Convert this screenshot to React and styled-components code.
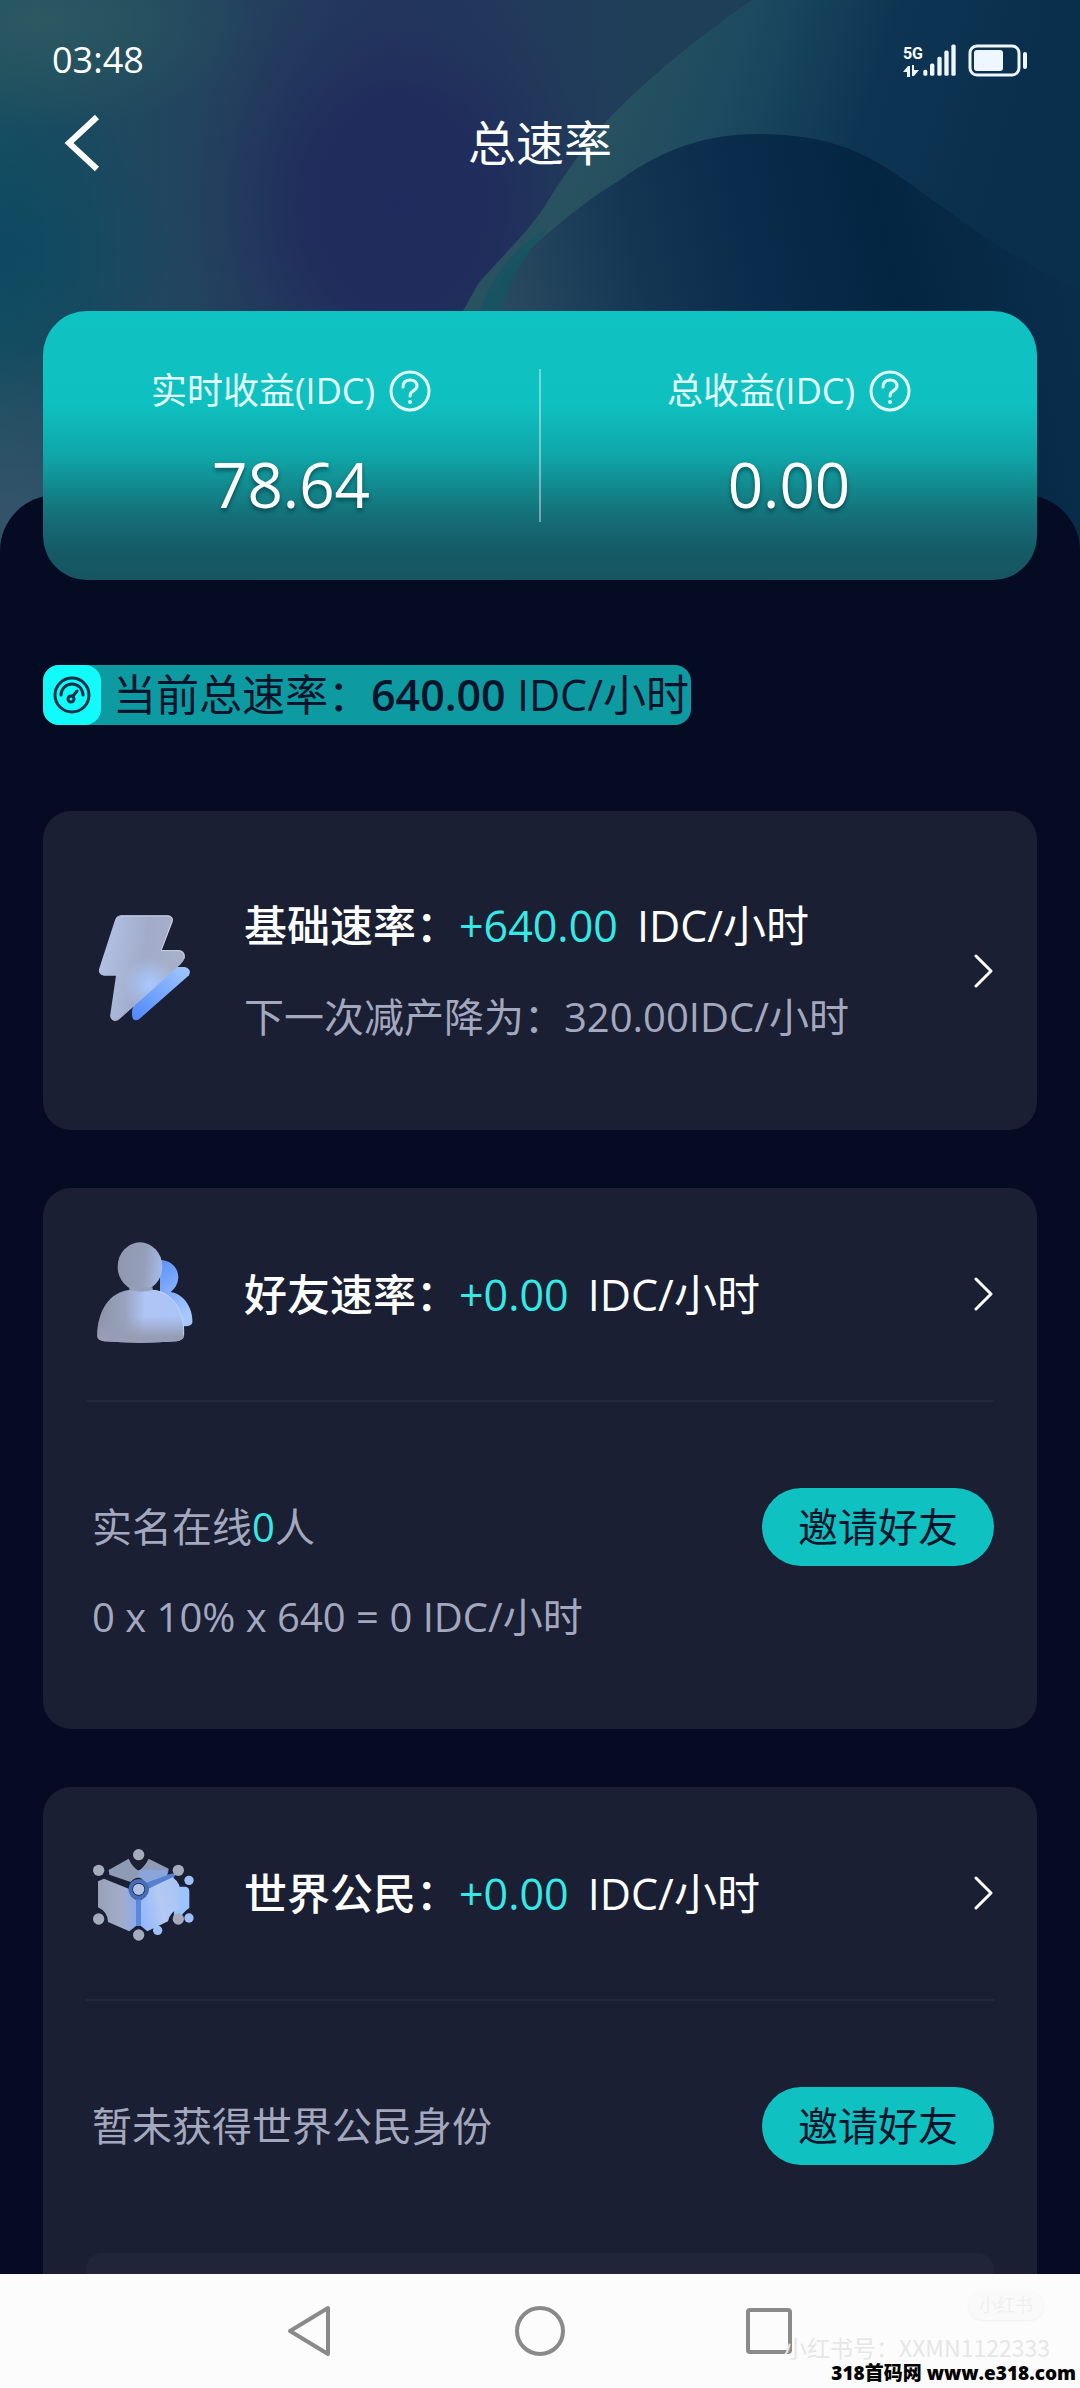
/* eslint react/prop-types: 0 */
import React from "react";
import styled, { createGlobalStyle } from "styled-components";

const GlobalStyle = createGlobalStyle`
    * {
        box-sizing: border-box;
    }

    body {
        margin: 0;
        background: #050b22;
        font-family: "Open Sans", "Noto Sans CJK SC", sans-serif;
        color: #ffffff;
    }

    button {
        padding: 0;
        border: none;
        background: transparent;
        font-family: inherit;
        color: inherit;
        cursor: pointer;
    }

    svg {
        display: block;
        flex: none;
    }
`;

const Screen = styled.div`
    display: flex;
    flex-direction: column;
    height: 100vh;
`;

const Scroll = styled.main`
    position: relative;
    flex: 1;
    min-height: 0;
    overflow-y: auto;
    scrollbar-width: none;
`;

const Artwork = styled.svg`
    position: absolute;
    top: 0;
    left: 0;
    width: 100%;
    height: 600px;
`;

const Top = styled.div`
    position: relative;
    padding-bottom: 297px;
`;

const StatusBar = styled.div`
    display: flex;
    align-items: center;
    justify-content: space-between;
    height: 88px;
    padding: 32px 52px 0;
    font-size: 36px;
    line-height: 56px;
`;

const StatusIcons = styled.div`
    display: flex;
    align-items: center;
    gap: 11px;
`;

const Signal = styled.div`
    display: flex;
    align-items: flex-end;
`;

const Network = styled.div`
    display: flex;
    flex-direction: column;
    gap: 3px;
    font-family: "Roboto", sans-serif;
    font-size: 16px;
    font-weight: 700;
    line-height: 16px;
`;

const Header = styled.header`
    display: grid;
    grid-template-columns: 100px 1fr 100px;
    align-items: center;
    height: 110px;
    padding: 0 32px;
`;

const IconButton = styled.button`
    display: flex;
    justify-content: center;
`;

const PageTitle = styled.h1`
    margin: 0;
    font-size: 48px;
    font-weight: 400;
    line-height: 72px;
    text-align: center;
`;

const Body = styled.div`
    position: relative;
    display: flex;
    flex-direction: column;
    align-items: stretch;
    padding: 0 43px 58px;
    background: #050b22;
    border-radius: 56px 56px 0 0;
`;

const Summary = styled.section`
    display: flex;
    align-items: center;
    margin-top: -184px;
    padding: 56px 0;
    border-radius: 44px;
    background: linear-gradient(#0fc3c2 0%, #0fc0c0 34%, #0fa6a9 54%, #12888c 66%, #146c75 78%, #155a66 90%, #165561 100%);
`;

const Stat = styled.div`
    display: flex;
    flex: 1;
    flex-direction: column;
    align-items: center;
    gap: 29px;
`;

const StatLabel = styled.div`
    display: flex;
    align-items: center;
    gap: 14px;
    font-size: 36px;
    line-height: 48px;
    color: #e4ffff;
`;

const StatValue = styled.div`
    font-size: 62px;
    line-height: 80px;
    text-shadow: 0 3px 4px rgba(0, 40, 50, 0.6);
`;

const Separator = styled.div`
    width: 2px;
    height: 153px;
    background: rgba(255, 255, 255, 0.4);
`;

const RateBadge = styled.div`
    display: flex;
    align-items: center;
    align-self: flex-start;
    gap: 12px;
    height: 60px;
    margin: 85px 0 86px;
    padding-right: 2px;
    border-radius: 16px;
    background: #0e9aa1;
    color: #06142b;
    font-size: 43px;
    line-height: 60px;
    white-space: nowrap;

    strong {
        font-weight: 600;
    }
`;

const BadgeIcon = styled.span`
    display: flex;
    align-items: center;
    justify-content: center;
    width: 58px;
    height: 60px;
    border-radius: 16px;
    background: #12fbfb;
`;

const Cards = styled.div`
    display: flex;
    flex-direction: column;
    gap: 58px;
`;

const Card = styled.section`
    padding: 0 43px;
    border-radius: 28px;
    background: #1a1f33;
`;

const CardHead = styled.div`
    display: flex;
    align-items: center;
    gap: 48px;
    height: ${({ $tall }) => ($tall ? "319px" : "212px")};
    padding-left: 6px;
`;

const CardText = styled.div`
    display: flex;
    flex: 1;
    flex-direction: column;
    gap: 31px;
    padding-top: 2px;
`;

const CardTitle = styled.h2`
    margin: 0;
    font-size: 43px;
    font-weight: 400;
    line-height: 60px;
    white-space: nowrap;

    b {
        font-weight: 500;
    }
`;

const Highlight = styled.span`
    color: #35e9e6;
`;

const Amount = styled(Highlight)`
    margin-right: 8px;
`;

const Muted = styled.p`
    margin: 0;
    font-size: 40px;
    line-height: 60px;
    color: #a3a8bf;
`;

const Details = styled.div`
    display: flex;
    flex-direction: column;
    gap: 21px;
    padding: 86px 0 82px;
    border-top: 2px solid #23283a;
`;

const DetailRow = styled.div`
    display: flex;
    align-items: center;
    justify-content: space-between;
    padding-left: 6px;
`;

const InviteButton = styled.button`
    width: 232px;
    height: 78px;
    border-radius: 39px;
    background: #0fc1c1;
    color: #06142b;
    font-size: 40px;
    line-height: 60px;
`;

const Inset = styled.div`
    height: 120px;
    margin-top: 67px;
    border-radius: 16px 16px 0 0;
    background: #20253a;
`;

const NavBar = styled.nav`
    position: relative;
    display: flex;
    flex: none;
    align-items: center;
    justify-content: center;
    gap: 180px;
    height: 114px;
    background: #fcfcfc;
    color: #8a8a8a;
`;

const Stamp = styled.div`
    position: absolute;
    right: 4px;
    bottom: 2px;
    display: flex;
    flex-direction: column;
    align-items: flex-end;
`;

const StampPill = styled.span`
    margin: 0 32px 14px 0;
    padding: 0 11px;
    border-radius: 16px;
    background: #fafafa;
    box-shadow: 0 1px 2px #f0f0f0;
    color: #efefef;
    font-size: 18px;
    line-height: 30px;
`;

const StampId = styled.span`
    margin-right: 26px;
    color: #e6e6e6;
    font-family: "Noto Sans CJK SC", sans-serif;
    font-size: 23px;
    line-height: 26px;
`;

const StampSite = styled.span`
    color: #000000;
    font-size: 19px;
    font-weight: 800;
    line-height: 26px;
`;

const Backdrop = () => (
    <Artwork viewBox="0 0 1080 600" preserveAspectRatio="none" aria-hidden="true">
        <defs>
            <linearGradient id="base" x1="0" y1="0" x2="1" y2="0">
                <stop offset="0" stopColor="#1a4f60" />
                <stop offset="0.2" stopColor="#23435e" />
                <stop offset="0.36" stopColor="#24345d" />
                <stop offset="0.6" stopColor="#1f3f58" />
            </linearGradient>
            <radialGradient id="indigo">
                <stop offset="0" stopColor="#1f2b5c" />
                <stop offset="0.45" stopColor="#202d5c" stopOpacity="0.9" />
                <stop offset="1" stopColor="#223a5c" stopOpacity="0" />
            </radialGradient>
            <radialGradient id="teal">
                <stop offset="0" stopColor="#0c4962" />
                <stop offset="1" stopColor="#0c4962" stopOpacity="0" />
            </radialGradient>
            <radialGradient id="moss">
                <stop offset="0" stopColor="#2c5861" />
                <stop offset="1" stopColor="#2c5861" stopOpacity="0" />
            </radialGradient>
            <radialGradient id="slate">
                <stop offset="0" stopColor="#34536a" />
                <stop offset="1" stopColor="#34536a" stopOpacity="0" />
            </radialGradient>
            <linearGradient id="wave" gradientUnits="userSpaceOnUse" x1="600" y1="100" x2="980" y2="220">
                <stop offset="0" stopColor="#28525f" />
                <stop offset="0.3" stopColor="#1d4a60" />
                <stop offset="0.65" stopColor="#0d3553" />
                <stop offset="1" stopColor="#0a2f4d" />
            </linearGradient>
            <linearGradient id="hill" gradientUnits="userSpaceOnUse" x1="500" y1="300" x2="1060" y2="180">
                <stop offset="0" stopColor="#2a4a60" />
                <stop offset="0.25" stopColor="#143653" />
                <stop offset="0.45" stopColor="#0a2b4b" />
                <stop offset="0.68" stopColor="#042542" />
                <stop offset="1" stopColor="#042542" stopOpacity="0.1" />
            </linearGradient>
        </defs>
        <rect width="1080" height="600" fill="url(#base)" />
        <ellipse cx="0" cy="250" rx="170" ry="180" fill="url(#teal)" />
        <ellipse cx="40" cy="20" rx="220" ry="110" fill="url(#moss)" />
        <ellipse cx="10" cy="510" rx="200" ry="160" fill="url(#slate)" />
        <ellipse cx="400" cy="205" rx="230" ry="260" fill="url(#indigo)" />
        <path d="M752 0C698 38 655 72 610 117C592 137 568 168 545 206C525 236 498 260 478 284L458 320V600H1080V0Z" fill="url(#wave)" />
        <path d="M478 325C484 300 492 282 530 249C560 222 590 198 620 180C665 147 710 134 758 134C813 134 850 146 880 164C935 197 990 250 1080 290V600H478Z" fill="url(#hill)" />
        <path d="M476 325C486 285 508 252 548 228C520 262 508 280 498 325Z" fill="#145562" fillOpacity="0.8" />
    </Artwork>
);

const SignalBars = () => (
    <svg width="34" height="33" viewBox="188 68 102 98" fill="#eef6ff" aria-hidden="true">
        <rect x="189" y="145" width="12" height="18" rx="5" />
        <rect x="209" y="126" width="13" height="37" rx="5" />
        <rect x="231" y="106" width="13" height="57" rx="5" />
        <rect x="252" y="87" width="13" height="76" rx="5" />
        <rect x="273" y="69" width="13" height="94" rx="5" />
    </svg>
);

const DataArrows = () => (
    <svg width="16" height="12" viewBox="0 0 16 12" fill="#eef6ff" aria-hidden="true">
        <path d="M0 7L5 1H7V12H4V7Z" />
        <path d="M9 0H11V5H16L11 11H9Z" />
    </svg>
);

const Battery = () => (
    <svg width="60" height="33" viewBox="0 0 60 33" fill="none" aria-hidden="true">
        <rect x="2" y="2" width="49" height="29" rx="7" stroke="#eef6ff" strokeWidth="3" />
        <rect x="6" y="6" width="29" height="21" rx="3" fill="#eef6ff" />
        <rect x="55" y="8" width="4" height="17" rx="2" fill="#eef6ff" />
    </svg>
);

const HelpIcon = () => (
    <svg width="42" height="42" viewBox="0 0 42 42" fill="none" stroke="currentColor" strokeWidth="3" strokeLinecap="round" aria-hidden="true">
        <circle cx="21" cy="21" r="19" />
        <path d="M14 17C14 12 17 10 21 10C25 10 28 12 28 16C28 21 21 20 21 26" />
        <circle cx="21" cy="32" r="2" fill="currentColor" stroke="none" />
    </svg>
);

const GaugeIcon = () => (
    <svg width="40" height="40" viewBox="0 0 40 40" fill="none" stroke="#0b3048" strokeWidth="3" strokeLinecap="round" aria-hidden="true">
        <circle cx="20" cy="20" r="17" />
        <path d="M9 20A11 11 0 0 1 31 20" />
        <path d="M21 21L25 16" />
        <circle cx="19" cy="24" r="3" />
    </svg>
);

const Chevron = () => (
    <svg width="20" height="34" viewBox="0 0 20 34" fill="none" stroke="#ffffff" strokeWidth="3" strokeLinecap="round" strokeLinejoin="round" aria-hidden="true">
        <path d="M2 2L17 17L2 32" />
    </svg>
);

const BoltIcon = () => (
    <svg width="104" height="112" viewBox="96 102 312 336" aria-hidden="true">
        <defs>
            <linearGradient id="boltFront" x1="0" y1="0.4" x2="1" y2="0.6">
                <stop offset="0" stopColor="#b3c1e4" />
                <stop offset="0.5" stopColor="#a1acca" />
                <stop offset="1" stopColor="#a9b1c8" />
            </linearGradient>
            <linearGradient id="boltBack" x1="0" y1="1" x2="1" y2="0">
                <stop offset="0" stopColor="#5087fa" />
                <stop offset="1" stopColor="#a0c8ff" />
            </linearGradient>
            <radialGradient id="boltGlow" gradientUnits="userSpaceOnUse" cx="270" cy="310" r="80">
                <stop offset="0" stopColor="#a9c8ff" />
                <stop offset="1" stopColor="#a9c8ff" stopOpacity="0" />
            </radialGradient>
            <path id="bolt" d="M182 103H324Q342 105 338 122L305 207H358Q378 211 374 232Q371 241 362 250L178 415Q166 424 156 416Q149 410 151 400L168 284H132Q115 281 117 265L165 117Q170 104 182 103Z" />
        </defs>
        <path d="M344 258H374Q396 264 387 283L238 414Q228 422 219 414Q212 396 220 375Z" fill="url(#boltBack)" />
        <use href="#bolt" fill="url(#boltFront)" />
        <use href="#bolt" fill="url(#boltGlow)" />
        <path d="M182 105H324Q340 107 336 122L303 209H358Q375 213 372 232" fill="none" stroke="#c8d0e4" strokeWidth="3" />
    </svg>
);

const FriendsIcon = () => (
    <svg width="104" height="112" viewBox="96 84 312 336" aria-hidden="true">
        <defs>
            <linearGradient id="headFront" x1="0" y1="0.4" x2="1" y2="0.5">
                <stop offset="0" stopColor="#9098ae" />
                <stop offset="0.6" stopColor="#959fb9" />
                <stop offset="1" stopColor="#a6bbea" />
            </linearGradient>
            <linearGradient id="bodyFront" x1="0" y1="0" x2="1" y2="0">
                <stop offset="0" stopColor="#8d94a8" />
                <stop offset="0.32" stopColor="#98a3bf" />
                <stop offset="0.55" stopColor="#b0c5f4" />
                <stop offset="1" stopColor="#a9c4f8" />
            </linearGradient>
            <linearGradient id="bodyShade" x1="0" y1="0" x2="0" y2="1">
                <stop offset="0.5" stopColor="#969db4" stopOpacity="0" />
                <stop offset="0.9" stopColor="#969db4" />
            </linearGradient>
            <linearGradient id="friendBack" x1="0" y1="0" x2="0.4" y2="1">
                <stop offset="0" stopColor="#5e92f8" />
                <stop offset="1" stopColor="#a6c8ff" />
            </linearGradient>
            <path id="torso" d="M208 240Q240 250 278 240C335 244 374 300 372 376Q371 391 350 394Q240 402 132 394Q112 391 112 378C112 300 150 246 208 240Z" />
        </defs>
        <path d="M300 150C334 150 355 174 355 203Q353 229 332 246C374 252 400 298 397 338Q394 348 376 349H300Z" fill="url(#friendBack)" />
        <ellipse cx="240" cy="170" rx="67" ry="73" fill="url(#headFront)" />
        <path d="M208 232H278V246H208Z" fill="#959fb9" />
        <use href="#torso" fill="url(#bodyFront)" />
        <use href="#torso" fill="url(#bodyShade)" />
        <path d="M278 241C335 244 374 300 371 376" fill="none" stroke="#c4d4f5" strokeWidth="3" />
    </svg>
);

const CubeIcon = () => (
    <svg width="104" height="112" viewBox="96 51 312 336" aria-hidden="true">
        <defs>
            <linearGradient id="cubeLeft" x1="0" y1="0" x2="1" y2="0">
                <stop offset="0" stopColor="#99a1b6" />
                <stop offset="0.6" stopColor="#a2acc8" />
                <stop offset="1" stopColor="#8fabea" />
            </linearGradient>
            <linearGradient id="cubeRight" x1="0" y1="0.6" x2="1" y2="0.3">
                <stop offset="0" stopColor="#98b8fb" />
                <stop offset="0.5" stopColor="#b4c9f3" />
                <stop offset="1" stopColor="#a9c4f5" />
            </linearGradient>
        </defs>
        <path d="M350 200H376Q388 202 388 214V264Q370 275 358 298L340 300Z" fill="#9cc4fd" />
        <path d="M236 180L350 158L340 176L262 206Z" fill="#5580cf" />
        <path d="M227 236H243V318H227Z" fill="#5b87dc" />
        <path d="M146 150L206 116Q216 140 236 152Q254 140 266 116L326 146Q326 158 320 166L258 188Q236 160 212 186L148 164Z" fill="#8f9ab5" />
        <path d="M236 150L320 150Q326 158 320 166L258 188Q248 172 236 170Z" fill="#8aa4dc" />
        <path d="M132 176L206 206Q210 230 228 240V318L208 334L144 306Q144 276 114 262V184Z" fill="url(#cubeLeft)" />
        <path d="M264 206L338 172Q352 182 358 196V266Q330 274 324 304L262 334L243 318V240Q262 230 264 206Z" fill="url(#cubeRight)" />
        <circle cx="236" cy="208" r="25" fill="none" stroke="#466db8" strokeWidth="12" />
        <g fill="#a4abbd">
            <circle cx="236" cy="104" r="17" />
            <circle cx="116" cy="151" r="17" />
            <circle cx="355" cy="151" r="17" />
            <circle cx="116" cy="297" r="17" />
            <circle cx="355" cy="297" r="17" />
            <circle cx="236" cy="345" r="17" />
        </g>
        <circle cx="236" cy="208" r="17" fill="#b2c2e8" />
        <g fill="#9fc1fb">
            <circle cx="387" cy="181" r="14" />
            <circle cx="387" cy="294" r="14" />
            <circle cx="293" cy="331" r="14" />
        </g>
    </svg>
);

const RateHead = ({ icon, name, amount, note }) => (
    <CardHead $tall={Boolean(note)}>
        {icon}
        <CardText>
            <CardTitle>
                <b>{name}：</b>
                <Amount>{amount}</Amount> IDC/小时
            </CardTitle>
            {note && <Muted>{note}</Muted>}
        </CardText>
        <IconButton type="button" aria-label={name}>
            <Chevron />
        </IconButton>
    </CardHead>
);

const Earnings = ({ label, value }) => (
    <Stat>
        <StatLabel>
            {label}
            <IconButton type="button" aria-label={label}>
                <HelpIcon />
            </IconButton>
        </StatLabel>
        <StatValue>{value}</StatValue>
    </Stat>
);

const App = () => {
    return (
        <Screen>
            <GlobalStyle />
            <Scroll>
                <Backdrop />
                <Top>
                    <StatusBar>
                        <span>03:48</span>
                        <StatusIcons>
                            <Signal>
                                <Network>
                                    5G
                                    <DataArrows />
                                </Network>
                                <SignalBars />
                            </Signal>
                            <Battery />
                        </StatusIcons>
                    </StatusBar>
                    <Header>
                        <IconButton type="button" aria-label="返回">
                            <svg width="38" height="58" viewBox="0 0 38 58" fill="none" stroke="#ffffff" strokeWidth="6" aria-hidden="true">
                                <path d="M34 3L6 29L34 55" />
                            </svg>
                        </IconButton>
                        <PageTitle>总速率</PageTitle>
                    </Header>
                </Top>
                <Body>
                    <Summary>
                        <Earnings label="实时收益(IDC)" value="78.64" />
                        <Separator />
                        <Earnings label="总收益(IDC)" value="0.00" />
                    </Summary>
                    <RateBadge>
                        <BadgeIcon>
                            <GaugeIcon />
                        </BadgeIcon>
                        <span>
                            当前总速率：<strong>640.00</strong> IDC/小时
                        </span>
                    </RateBadge>
                    <Cards>
                        <Card>
                            <RateHead
                                icon={<BoltIcon />}
                                name="基础速率"
                                amount="+640.00"
                                note="下一次减产降为：320.00IDC/小时"
                            />
                        </Card>
                        <Card>
                            <RateHead icon={<FriendsIcon />} name="好友速率" amount="+0.00" />
                            <Details>
                                <DetailRow>
                                    <Muted>
                                        实名在线<Highlight>0</Highlight>人
                                    </Muted>
                                    <InviteButton type="button">邀请好友</InviteButton>
                                </DetailRow>
                                <DetailRow>
                                    <Muted>0 x 10% x 640 = 0 IDC/小时</Muted>
                                </DetailRow>
                            </Details>
                        </Card>
                        <Card>
                            <RateHead icon={<CubeIcon />} name="世界公民" amount="+0.00" />
                            <Details>
                                <DetailRow>
                                    <Muted>暂未获得世界公民身份</Muted>
                                    <InviteButton type="button">邀请好友</InviteButton>
                                </DetailRow>
                                <Inset />
                            </Details>
                        </Card>
                    </Cards>
                </Body>
            </Scroll>
            <NavBar>
                <IconButton type="button" aria-label="返回">
                    <svg width="50" height="54" viewBox="0 0 50 54" fill="none" stroke="currentColor" strokeWidth="4" strokeLinejoin="round" aria-hidden="true">
                        <path d="M43 4V50L5 27Z" />
                    </svg>
                </IconButton>
                <IconButton type="button" aria-label="主页">
                    <svg width="50" height="54" viewBox="0 0 50 54" fill="none" stroke="currentColor" strokeWidth="4" aria-hidden="true">
                        <circle cx="25" cy="27" r="23" />
                    </svg>
                </IconButton>
                <IconButton type="button" aria-label="最近任务">
                    <svg width="50" height="54" viewBox="0 0 50 54" fill="none" stroke="currentColor" strokeWidth="4" aria-hidden="true">
                        <rect x="3" y="6" width="42" height="42" rx="2" />
                    </svg>
                </IconButton>
                <Stamp>
                    <StampPill>小红书</StampPill>
                    <StampId>小红书号：XXMN1122333</StampId>
                    <StampSite>318首码网 www.e318.com</StampSite>
                </Stamp>
            </NavBar>
        </Screen>
    );
};

export default App;
